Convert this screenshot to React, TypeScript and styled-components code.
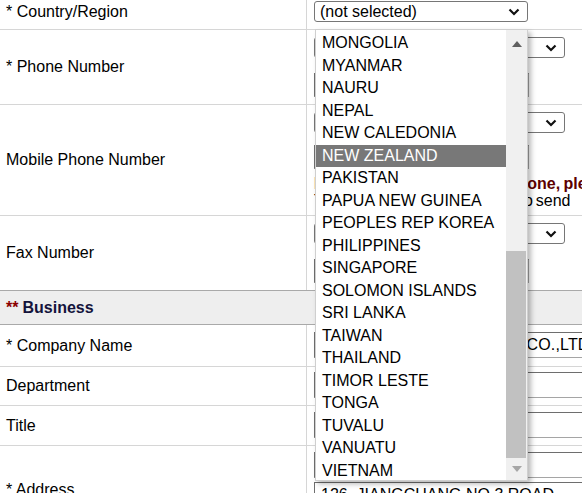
import React from "react";
import styled, { createGlobalStyle } from "styled-components";

const GlobalStyle = createGlobalStyle`
  html, body {
    margin: 0;
    padding: 0;
    background: #ffffff;
    overflow: hidden;
  }
  body {
    font-family: "Liberation Sans", Arial, sans-serif;
    font-size: 16px;
    color: #000;
  }
`;

const Form = styled.div`
  width: 582px;
  display: flex;
  flex-direction: column;
`;

const Row = styled.div<{ $h: number; $flat?: boolean }>`
  display: grid;
  grid-template-columns: 307px 1fr;
  height: ${(p) => p.$h}px;
  box-sizing: border-box;
  border-bottom: ${(p) => (p.$flat ? "none" : "1px solid #d6d6d6")};
`;

const Label = styled.div<{ $top?: number }>`
  display: flex;
  align-items: ${(p) => (p.$top !== undefined ? "flex-start" : "center")};
  padding: ${(p) => p.$top ?? 0}px 0 0 6px;
  border-right: 1px solid #d6d6d6;
  white-space: nowrap;
`;

const Field = styled.div<{ $pt: number; $gap?: number }>`
  position: relative;
  display: flex;
  flex-direction: column;
  align-items: flex-start;
  gap: ${(p) => p.$gap ?? 0}px;
  padding: ${(p) => p.$pt}px 0 0 7px;
  min-width: 0;
`;

const SelectBox = styled.div<{ $w: number }>`
  box-sizing: border-box;
  width: ${(p) => p.$w}px;
  height: 21px;
  border: 1px solid #767676;
  border-radius: 3px;
  background: #fff;
  display: flex;
  align-items: center;
  justify-content: space-between;
  padding: 0 7px 0 5px;
  flex-shrink: 0;
`;

const TextInput = styled.input<{ $w: number; $h?: number; $track?: number }>`
  box-sizing: border-box;
  width: ${(p) => p.$w}px;
  height: ${(p) => p.$h ?? 24}px;
  border: 1px solid #a5a5a5;
  border-top-color: #6e6e6e;
  border-left-color: #6e6e6e;
  padding: 0 6px;
  font: inherit;
  letter-spacing: ${(p) => p.$track ?? 0}px;
  color: #000;
  background: #fff;
  outline: none;
  flex-shrink: 0;
`;

const Notes = styled.div`
  margin-top: -6px;
`;

const Note = styled.div<{ $strong?: boolean; $spacing: number }>`
  line-height: 17px;
  white-space: nowrap;
  word-spacing: ${(p) => p.$spacing}px;
  font-weight: ${(p) => (p.$strong ? 700 : 400)};
  color: ${(p) => (p.$strong ? "#5c0000" : "#000")};
`;

const Section = styled.div`
  height: 35px;
  box-sizing: border-box;
  background: #eeeeee;
  border-top: 1px solid #a9a9a9;
  border-bottom: 1px solid #a9a9a9;
  display: flex;
  align-items: center;
  padding-left: 6px;
  font-weight: 700;
  color: #14143c;
`;

const Mark = styled.span`
  color: #8b0000;
  margin-right: 4px;
`;

const Dropdown = styled.div`
  position: absolute;
  top: 29px;
  left: 8px;
  width: 213px;
  height: 452px;
  box-sizing: border-box;
  border: 1px solid #cfcfcf;
  background: #fff;
  display: flex;
  z-index: 10;
  box-shadow: 3px 3px 5px rgba(0, 0, 0, 0.28);
`;

const List = styled.ul`
  list-style: none;
  margin: 0;
  padding: 2px 0 0;
  flex: 1;
  overflow: hidden;
`;

const Item = styled.li<{ $active?: boolean }>`
  height: 22.5px;
  line-height: 22.5px;
  padding-left: 6px;
  white-space: nowrap;
  background: ${(p) => (p.$active ? "#787878" : "transparent")};
  color: ${(p) => (p.$active ? "#fff" : "#000")};
`;

const Scroll = styled.div`
  width: 21px;
  background: #f0f0f0;
  display: flex;
  flex-direction: column;
`;

const ArrowBtn = styled.div<{ $h: number }>`
  height: ${(p) => p.$h}px;
  display: flex;
  align-items: center;
  justify-content: center;
  flex-shrink: 0;
`;

const Track = styled.div`
  flex: 1;
  display: flex;
  flex-direction: column;
  justify-content: flex-end;
`;

const Thumb = styled.div`
  height: 207px;
  margin-right: 1px;
  background: #c1c1c1;
`;

const Chevron = () => (
  <svg width="12" height="8" viewBox="0 0 12 8">
    <polyline points="1.5,1.5 6,6 10.5,1.5" fill="none" stroke="#111" strokeWidth="2.2" />
  </svg>
);

const Tri = ({ up, color }: { up?: boolean; color: string }) => (
  <svg width="10" height="6" viewBox="0 0 10 6">
    <polygon points={up ? "0,6 5,0 10,6" : "0,0 10,0 5,6"} fill={color} />
  </svg>
);

const countries = [
  "MONGOLIA",
  "MYANMAR",
  "NAURU",
  "NEPAL",
  "NEW CALEDONIA",
  "NEW ZEALAND",
  "PAKISTAN",
  "PAPUA NEW GUINEA",
  "PEOPLES REP KOREA",
  "PHILIPPINES",
  "SINGAPORE",
  "SOLOMON ISLANDS",
  "SRI LANKA",
  "TAIWAN",
  "THAILAND",
  "TIMOR LESTE",
  "TONGA",
  "TUVALU",
  "VANUATU",
  "VIETNAM",
];

export default function App() {
  return (
    <>
      <GlobalStyle />
      <Form>
        <Row $h={30}>
          <Label $top={3}>* Country/Region</Label>
          <Field $pt={1}>
            <SelectBox $w={214}>
              (not selected)
              <Chevron />
            </SelectBox>
            <Dropdown>
              <List>
                {countries.map((c) => (
                  <Item key={c} $active={c === "NEW ZEALAND"}>
                    {c}
                  </Item>
                ))}
              </List>
              <Scroll>
                <ArrowBtn $h={28}>
                  <Tri up color="#606060" />
                </ArrowBtn>
                <Track>
                  <Thumb />
                </Track>
                <ArrowBtn $h={22}>
                  <Tri color="#a6a6a6" />
                </ArrowBtn>
              </Scroll>
            </Dropdown>
          </Field>
        </Row>

        <Row $h={75}>
          <Label>* Phone Number</Label>
          <Field $pt={7} $gap={15}>
            <SelectBox $w={251}>
              China (+86)
              <Chevron />
            </SelectBox>
            <TextInput $w={215} readOnly defaultValue="" />
          </Field>
        </Row>

        <Row $h={111}>
          <Label>Mobile Phone Number</Label>
          <Field $pt={7} $gap={12}>
            <SelectBox $w={251}>
              China (+86)
              <Chevron />
            </SelectBox>
            <TextInput $w={215} readOnly defaultValue="" />
            <Notes>
              <Note $strong $spacing={-1.1}>
                If you don't have a mobile phone, please
              </Note>
              <Note $spacing={-1.6}>This number will only be used to send</Note>
            </Notes>
          </Field>
        </Row>

        <Row $h={74} $flat>
          <Label>Fax Number</Label>
          <Field $pt={7} $gap={15}>
            <SelectBox $w={251}>
              China (+86)
              <Chevron />
            </SelectBox>
            <TextInput $w={215} readOnly defaultValue="" />
          </Field>
        </Row>

        <Section>
          <Mark>**</Mark>Business
        </Section>

        <Row $h={42}>
          <Label>* Company Name</Label>
          <Field $pt={7}>
            <TextInput
              $w={300}
              $h={26}
              $track={0.15}
              readOnly
              defaultValue="JIANGSU HUAXIN MOTOR CO.,LTD."
            />
          </Field>
        </Row>

        <Row $h={39}>
          <Label>Department</Label>
          <Field $pt={5}>
            <TextInput $w={300} $h={26} readOnly defaultValue="" />
          </Field>
        </Row>

        <Row $h={40}>
          <Label>Title</Label>
          <Field $pt={6}>
            <TextInput $w={300} $h={26} readOnly defaultValue="" />
          </Field>
        </Row>

        <Row $h={89}>
          <Label>* Address</Label>
          <Field $pt={6} $gap={4}>
            <TextInput $w={300} $h={26} readOnly defaultValue="" />
            <TextInput $w={300} $h={26} readOnly defaultValue="126, JIANGCHANG NO.3 ROAD" />
          </Field>
        </Row>
      </Form>
    </>
  );
}
